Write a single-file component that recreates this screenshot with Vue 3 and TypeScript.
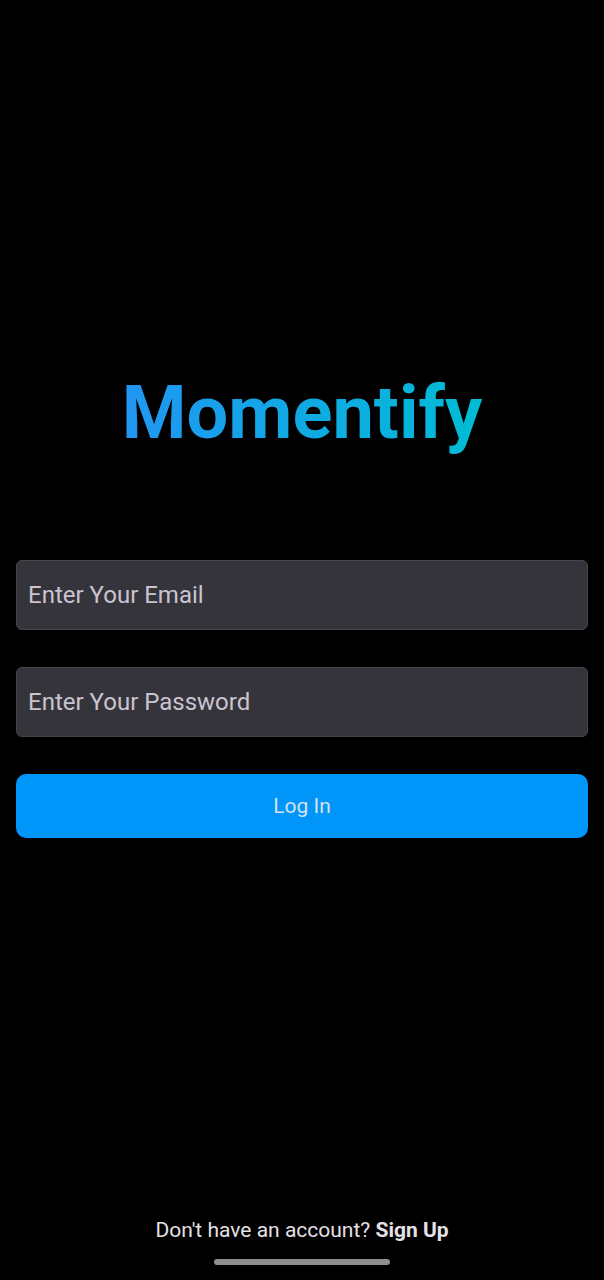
<script setup lang="ts">
import { ref } from 'vue'

const email = ref<string>('')
const password = ref<string>('')

function logIn(): void {
  password.value = ''
}
</script>

<template>
  <div class="screen">
    <main class="content">
      <h1 class="brand">Momentify</h1>
      <form class="form" @submit.prevent="logIn">
        <input
          v-model="email"
          class="field"
          type="email"
          aria-label="Enter Your Email"
          placeholder="Enter Your Email"
        />
        <input
          v-model="password"
          class="field"
          type="password"
          aria-label="Enter Your Password"
          placeholder="Enter Your Password"
        />
        <button class="submit" type="submit">Log In</button>
      </form>
    </main>
    <footer class="footer">
      <p class="prompt">Don't have an account? <a class="link" href="#signup">Sign Up</a></p>
      <div class="home-bar"></div>
    </footer>
  </div>
</template>

<style>
body {
  margin: 0;
  background: #000;
}
</style>

<style scoped>
.screen {
  box-sizing: border-box;
  display: flex;
  flex-direction: column;
  min-height: 100vh;
  padding: 0 16px;
  background: #000;
  font-family: Roboto, "Noto Sans", sans-serif;
}

.content {
  flex: 1;
  display: flex;
  flex-direction: column;
  justify-content: center;
  gap: 104px;
}

.brand {
  align-self: center;
  margin: 0;
  font-size: 74px;
  line-height: 86px;
  font-weight: 700;
  color: transparent;
  background: linear-gradient(90deg, #2196f3, #00bcd4);
  -webkit-background-clip: text;
  background-clip: text;
}

.form {
  display: flex;
  flex-direction: column;
  gap: 37px;
}

.field {
  box-sizing: border-box;
  width: 100%;
  height: 70px;
  padding: 0 11px;
  border: 1px solid #47464f;
  border-radius: 6px;
  outline: none;
  background: #36343b;
  color: #e6e1e5;
  font-family: inherit;
  font-size: 24px;
}

.field::placeholder {
  color: #c9c4d0;
  opacity: 1;
}

.submit {
  height: 64px;
  border: 0;
  border-radius: 10px;
  background: #0095f8;
  color: #d4e3f3;
  font-family: inherit;
  font-size: 21px;
}

.footer {
  display: flex;
  flex-direction: column;
  align-items: center;
  gap: 17px;
  padding: 10px 0 15px;
}

.prompt {
  margin: 0;
  color: #e6e1e5;
  font-size: 21px;
  line-height: 24px;
}

.link {
  color: inherit;
  font-weight: 700;
  text-decoration: none;
}

.home-bar {
  width: 176px;
  height: 6px;
  border-radius: 3px;
  background: #8f8f8f;
}
</style>
